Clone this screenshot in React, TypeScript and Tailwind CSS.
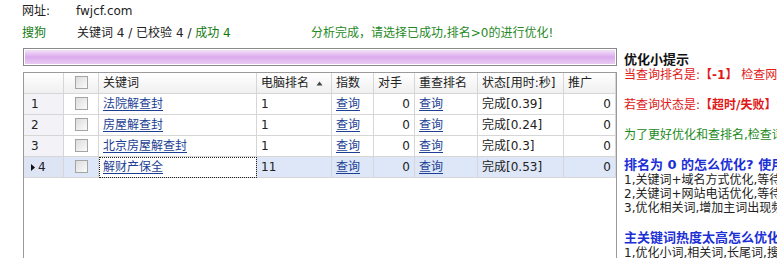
import React from 'react'

interface Row {
  id: number
  keyword: string
  rank: string
  rival: string
  status: string
  promo: string
}

const rows: Row[] = [
  { id: 1, keyword: '法院解查封', rank: '1', rival: '0', status: '完成[0.39]', promo: '0' },
  { id: 2, keyword: '房屋解查封', rank: '1', rival: '0', status: '完成[0.24]', promo: '0' },
  { id: 3, keyword: '北京房屋解查封', rank: '1', rival: '0', status: '完成[0.3]', promo: '0' },
  { id: 4, keyword: '解财产保全', rank: '11', rival: '0', status: '完成[0.53]', promo: '0' },
]

const cols = 'grid grid-cols-[40px_35px_158px_75px_42px_41px_63px_86px_52px]'
const cell = 'h-[21px] border-r border-b border-[#d6d6d6] px-[4px] leading-[20px] whitespace-nowrap overflow-hidden'

function CheckBox() {
  return (
    <div className="mx-auto mt-[3px] h-[13px] w-[13px] border border-[#a4a4a4] bg-gradient-to-br from-[#dcdcdc] to-[#fbfbfb]" />
  )
}

function Link({ children }: { children: React.ReactNode }) {
  return <span className="text-[#1c3f94] underline underline-offset-2">{children}</span>
}

export default function App() {
  return (
    <div className="flex h-[258px] w-[777px] overflow-hidden bg-white font-['DejaVu_Sans','Noto_Sans_CJK_SC',sans-serif] text-[12px] text-[#222]">
      {/* main column */}
      <div className="w-[617px] shrink-0 pl-[22px]">
        <div className="mt-[3px] flex h-[16px] items-center leading-[16px]">
          <span className="w-[54px]">网址:</span>
          <span>fwjcf.com</span>
        </div>
        <div className="mt-[6px] flex h-[16px] items-center leading-[16px]">
          <span className="w-[55px] text-[#127a12]">搜狗</span>
          <span className="w-[234px]">
            关键词 4 / 已校验 4 / <span className="text-[#127a12]">成功 4</span>
          </span>
          <span className="text-[#1f8a1f]">分析完成，请选择已成功,排名&gt;0的进行优化!</span>
        </div>

        {/* progress bar */}
        <div className="ml-[1px] mt-[7px] h-[18px] border border-[#8a8a8a] bg-white p-[1px]">
          <div className="h-full w-full bg-gradient-to-b from-[#f3e2f7] via-[#dcaaed] to-[#e9ccf3]" />
        </div>

        {/* grid */}
        <div className="ml-[1px] mt-[6px] h-[200px] border border-[#9a9a9a] bg-white">
          <div className={`${cols} bg-gradient-to-b from-[#ffffff] to-[#efefef]`}>
            <div className={cell} />
            <div className={cell}>
              <CheckBox />
            </div>
            <div className={cell}>关键词</div>
            <div className={`${cell} flex items-center justify-between`}>
              <span>电脑排名</span>
              <svg width="7" height="5" viewBox="0 0 7 5" className="mr-[4px]">
                <path d="M3.5 0.5 L6.5 4.5 L0.5 4.5 Z" fill="#444" />
              </svg>
            </div>
            <div className={cell}>指数</div>
            <div className={cell}>对手</div>
            <div className={cell}>重查排名</div>
            <div className={cell}>状态[用时:秒]</div>
            <div className={cell}>推广</div>
          </div>

          {rows.map((r) => {
            const selected = r.id === 4
            const bg = selected ? 'bg-[#dde7f8]' : 'bg-white'
            return (
              <div key={r.id} className={cols}>
                <div className={`${cell} ${selected ? 'bg-[#dde5f5]' : 'bg-[#f3f3f7]'} flex items-center pl-[7px]`}>
                  {selected && (
                    <svg width="4" height="7" viewBox="0 0 4 7" className="mr-[3px]">
                      <path d="M0 0 L4 3.5 L0 7 Z" fill="#111" />
                    </svg>
                  )}
                  <span>{r.id}</span>
                </div>
                <div className={`${cell} ${bg}`}>
                  <CheckBox />
                </div>
                <div
                  className={`${cell} ${
                    selected ? 'bg-white outline-1 outline-dotted outline-[#222] -outline-offset-1' : 'bg-white'
                  }`}
                >
                  <Link>{r.keyword}</Link>
                </div>
                <div className={`${cell} ${bg}`}>{r.rank}</div>
                <div className={`${cell} ${bg}`}>
                  <Link>查询</Link>
                </div>
                <div className={`${cell} ${bg} text-right`}>{r.rival}</div>
                <div className={`${cell} ${bg}`}>
                  <Link>查询</Link>
                </div>
                <div className={`${cell} ${bg}`}>{r.status}</div>
                <div className={`${cell} ${bg} text-right`}>{r.promo}</div>
              </div>
            )
          })}
        </div>
      </div>

      {/* tips panel */}
      <div className="ml-[7px] flex min-w-0 flex-1 flex-col whitespace-nowrap pt-[52px]">
        <div className="h-[16px] text-[13px] font-bold leading-[16px] text-[#111]">优化小提示</div>
        <div className="leading-[15px] text-[#e01818]">
          当查询排名是:<span className="font-bold">【-1】</span> 检查网站是否被收录
        </div>
        <div className="mt-[15px] leading-[15px] text-[#e01818]">
          若查询状态是:<span className="font-bold">【超时/失败】</span>请重新查询
        </div>
        <div className="mt-[15px] leading-[15px] text-[#1a8a1a]">为了更好优化和查排名,检查词是否正确</div>
        <div className="mt-[14px] h-[16px] text-[13px] font-bold leading-[16px] text-[#1c2fd6]">
          排名为 0 的怎么优化? 使用以下方法
        </div>
        <div className="leading-[14px] text-[#222]">1,关键词+域名方式优化,等待收录</div>
        <div className="leading-[14px] text-[#222]">2,关键词+网站电话优化,等待收录</div>
        <div className="leading-[14px] text-[#222]">3,优化相关词,增加主词出现频率</div>
        <div className="mt-[15px] h-[16px] text-[13px] font-bold leading-[16px] text-[#1c2fd6]">
          主关键词热度太高怎么优化
        </div>
        <div className="leading-[14px] text-[#222]">1,优化小词,相关词,长尾词,搜索词</div>
      </div>
    </div>
  )
}
